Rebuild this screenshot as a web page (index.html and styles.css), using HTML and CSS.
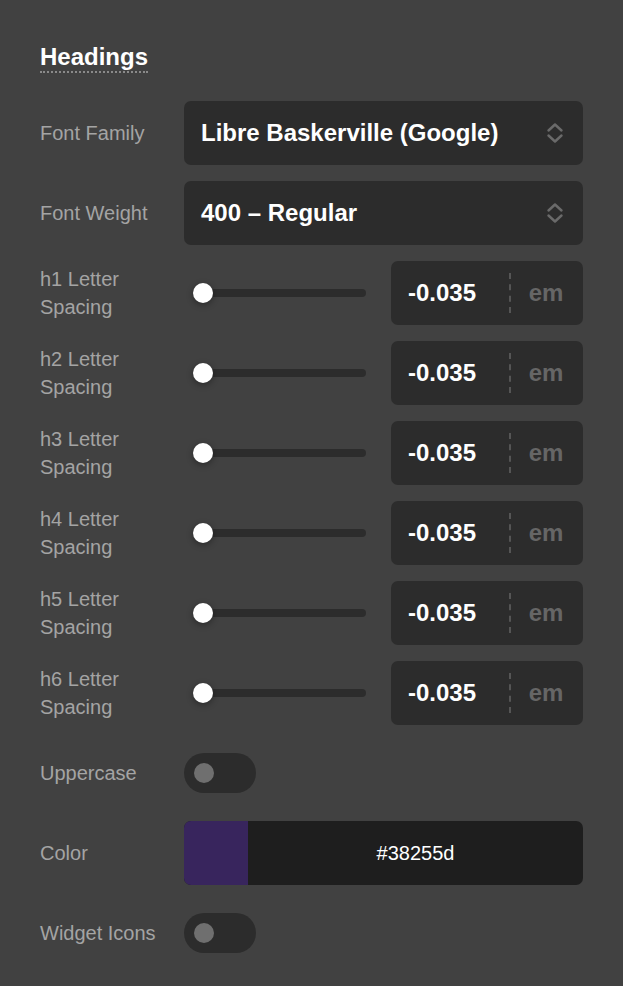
FILE: index.html
```html
<!DOCTYPE html>
<html lang="en">
<head>
<meta charset="utf-8">
<title>Headings</title>
<link rel="stylesheet" href="styles.css">
</head>
<body>
<div class="panel">
  <h2 class="title"><span>Headings</span></h2>

  <div class="rows">
    <div class="row">
      <div class="label">Font Family</div>
      <div class="select">
        <span class="select-text">Libre Baskerville (Google)</span>
        <svg class="chev" width="18" height="22" viewBox="0 0 18 22"><path d="M2.5 8.5 L9 2.5 L15.5 8.5 M2.5 13.5 L9 19.5 L15.5 13.5" fill="none" stroke="#6a6a6a" stroke-width="2.4" stroke-linecap="round" stroke-linejoin="round"/></svg>
      </div>
    </div>

    <div class="row">
      <div class="label">Font Weight</div>
      <div class="select">
        <span class="select-text">400 – Regular</span>
        <svg class="chev" width="18" height="22" viewBox="0 0 18 22"><path d="M2.5 8.5 L9 2.5 L15.5 8.5 M2.5 13.5 L9 19.5 L15.5 13.5" fill="none" stroke="#6a6a6a" stroke-width="2.4" stroke-linecap="round" stroke-linejoin="round"/></svg>
      </div>
    </div>

    <div class="row">
      <div class="label">h1 Letter Spacing</div>
      <div class="range-row">
        <div class="slider"><div class="track"></div><div class="thumb"></div></div>
        <div class="numbox"><span class="num">-0.035</span><span class="unit">em</span></div>
      </div>
    </div>

    <div class="row">
      <div class="label">h2 Letter Spacing</div>
      <div class="range-row">
        <div class="slider"><div class="track"></div><div class="thumb"></div></div>
        <div class="numbox"><span class="num">-0.035</span><span class="unit">em</span></div>
      </div>
    </div>

    <div class="row">
      <div class="label">h3 Letter Spacing</div>
      <div class="range-row">
        <div class="slider"><div class="track"></div><div class="thumb"></div></div>
        <div class="numbox"><span class="num">-0.035</span><span class="unit">em</span></div>
      </div>
    </div>

    <div class="row">
      <div class="label">h4 Letter Spacing</div>
      <div class="range-row">
        <div class="slider"><div class="track"></div><div class="thumb"></div></div>
        <div class="numbox"><span class="num">-0.035</span><span class="unit">em</span></div>
      </div>
    </div>

    <div class="row">
      <div class="label">h5 Letter Spacing</div>
      <div class="range-row">
        <div class="slider"><div class="track"></div><div class="thumb"></div></div>
        <div class="numbox"><span class="num">-0.035</span><span class="unit">em</span></div>
      </div>
    </div>

    <div class="row">
      <div class="label">h6 Letter Spacing</div>
      <div class="range-row">
        <div class="slider"><div class="track"></div><div class="thumb"></div></div>
        <div class="numbox"><span class="num">-0.035</span><span class="unit">em</span></div>
      </div>
    </div>

    <div class="row">
      <div class="label">Uppercase</div>
      <div><div class="toggle"><div class="knob"></div></div></div>
    </div>

    <div class="row">
      <div class="label">Color</div>
      <div class="color">
        <div class="swatch"></div>
        <div class="hex">#38255d</div>
      </div>
    </div>

    <div class="row">
      <div class="label">Widget Icons</div>
      <div><div class="toggle"><div class="knob"></div></div></div>
    </div>
  </div>
</div>
</body>
</html>
```

FILE: styles.css
```css
html, body {
  margin: 0;
  padding: 0;
  background: #414141;
}
body {
  font-family: "Liberation Sans", Arial, sans-serif;
  color: #fff;
}
.panel {
  padding: 43px 40px 20px 40px;
}
.title {
  margin: 0 0 28px 0;
  font-size: 24px;
  line-height: 28px;
  font-weight: 700;
  color: #fff;
}
.title span {
  display: inline-block;
  border-bottom: 2px dotted #8a8a8a;
}
.rows {
  display: flex;
  flex-direction: column;
  gap: 16px;
}
.row {
  display: grid;
  grid-template-columns: 144px 1fr;
  align-items: center;
  height: 64px;
}
.label {
  font-size: 20px;
  line-height: 28px;
  color: #a4a4a4;
  width: 120px;
}
.select {
  height: 64px;
  background: #2c2c2c;
  border-radius: 7px;
  display: flex;
  align-items: center;
  justify-content: space-between;
  padding: 0 19px 0 17px;
  box-sizing: border-box;
}
.select-text {
  font-size: 24px;
  font-weight: 700;
  color: #fff;
}
.chev {
  display: block;
}
.range-row {
  display: grid;
  grid-template-columns: 1fr 192px;
  align-items: center;
  height: 64px;
}
.slider {
  position: relative;
  height: 20px;
  margin: 0 25px 0 9px;
}
.track {
  position: absolute;
  left: 0;
  right: 0;
  top: 6px;
  height: 8px;
  border-radius: 4px;
  background: #2c2c2c;
}
.thumb {
  position: absolute;
  left: 0;
  top: 0;
  width: 20px;
  height: 20px;
  border-radius: 50%;
  background: #fff;
  box-shadow: 0 2px 6px rgba(0, 0, 0, 0.35);
}
.numbox {
  height: 64px;
  background: #2c2c2c;
  border-radius: 7px;
  display: grid;
  grid-template-columns: 118px 72px;
  align-items: center;
}
.num {
  font-size: 24px;
  font-weight: 700;
  color: #fff;
  padding-left: 17px;
}
.unit {
  font-size: 24px;
  font-weight: 700;
  color: #666;
  text-align: center;
  border-left: 2px dashed #555;
  line-height: 40px;
  height: 40px;
}
.toggle {
  width: 72px;
  height: 40px;
  border-radius: 20px;
  background: #2c2c2c;
  display: flex;
  align-items: center;
  padding-left: 10px;
  box-sizing: border-box;
}
.knob {
  width: 20px;
  height: 20px;
  border-radius: 50%;
  background: #6f6f6f;
}
.color {
  height: 64px;
  border-radius: 7px;
  overflow: hidden;
  display: flex;
  background: #1e1e1e;
}
.swatch {
  width: 64px;
  background: #38255d;
}
.hex {
  flex: 1;
  display: flex;
  align-items: center;
  justify-content: center;
  font-size: 20px;
  color: #fff;
}
```
